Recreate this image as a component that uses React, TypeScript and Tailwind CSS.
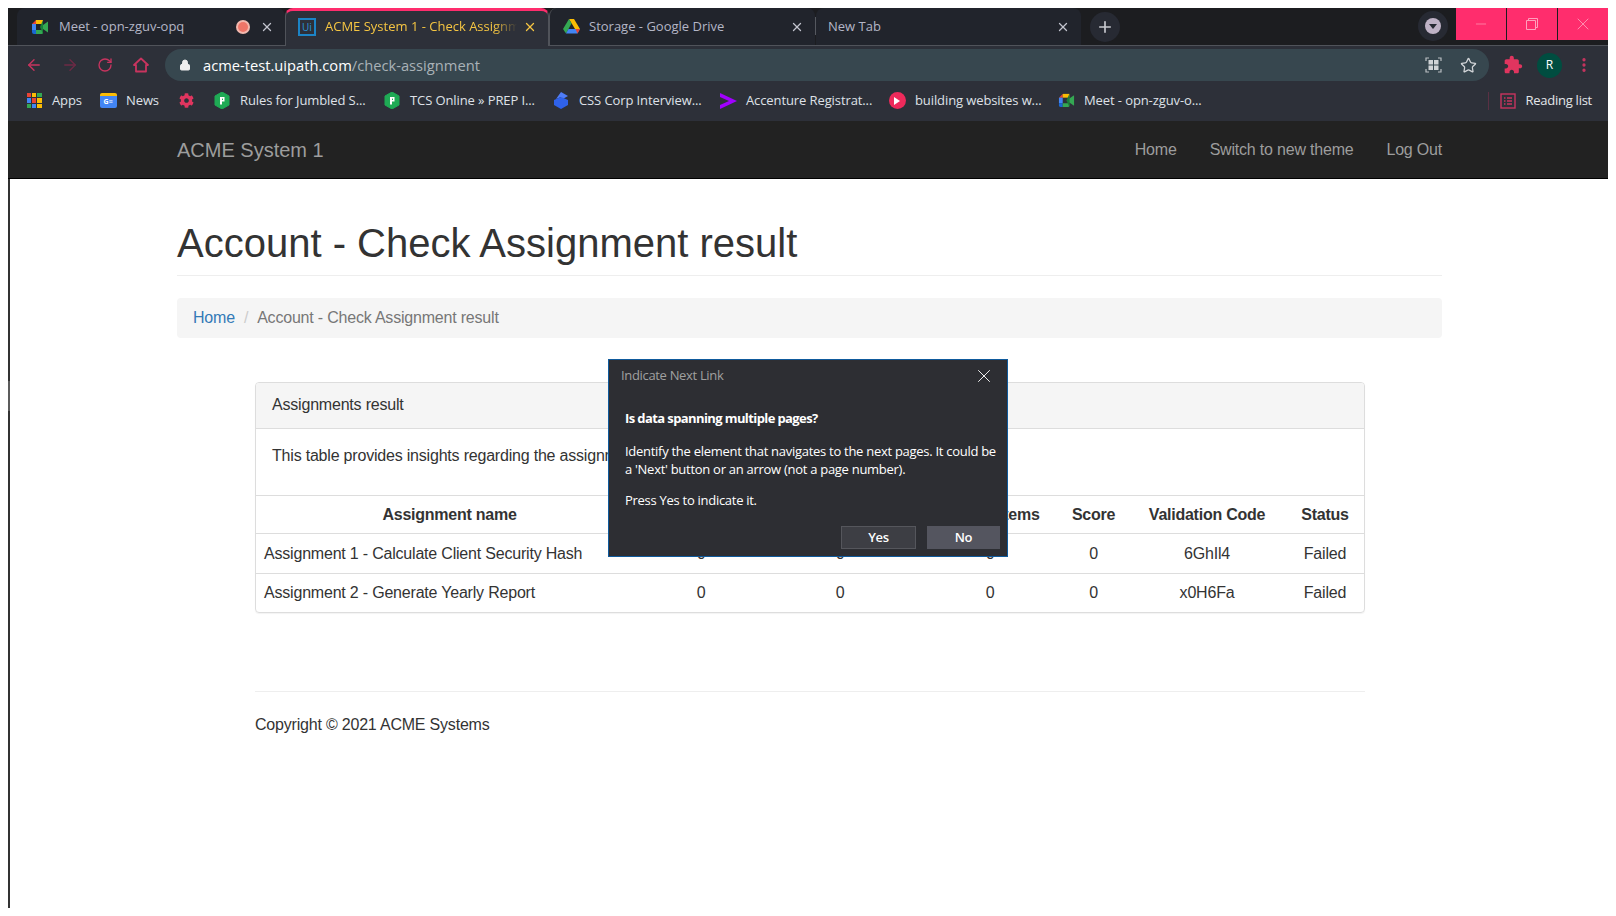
import React from "react";
import { ArrowLeft, ArrowRight, RotateCw, Lock, Star, X, Plus, MoreVertical, Minus } from "lucide-react";
import { FaCog } from "react-icons/fa";

const MeetIcon = ({ size = 18 }: { size?: number }) => (
  <svg width={size} height={size} viewBox="0 0 18 18">
    <path d="M1 6 L5 2 H5 V6 Z" fill="#ea4335" />
    <path d="M5 2 H12 V6 H5 Z" fill="#fbbc04" />
    <path d="M1 6 H5 V12 H1 Z" fill="#4285f4" />
    <path d="M1 12 H5 V16 H3 Q1 16 1 14 Z" fill="#1967d2" />
    <path d="M5 12 H12 V14.5 Q12 16 10.5 16 H5 Z" fill="#34a853" />
    <path d="M12 2 V6 L12 12 V16 L9 9 Z" fill="#188038" />
    <path d="M12 7 L17 3.5 V14.5 L12 11 Z" fill="#34a853" />
  </svg>
);

const DriveIcon = () => (
  <svg width="17" height="15" viewBox="0 0 17 15">
    <path d="M6 0 H11 L17 10 H12 Z" fill="#fbbc04" />
    <path d="M6 0 L8.5 4.5 L3 14.5 L0 10 Z" fill="#34a853" />
    <path d="M5.5 10 H17 L14.5 14.5 H3 Z" fill="#4285f4" />
    <path d="M14.5 14.5 L12.5 10 H17 Z" fill="#ea4335" />
  </svg>
);

const GreenBadge = () => (
  <svg width="16" height="17" viewBox="0 0 16 17">
    <path d="M8 0 L15 4 V13 L8 17 L1 13 V4 Z" fill="#1faa55" strokeLinejoin="round" stroke="#1faa55" />
    <path d="M6 5 H10.5 V9.5 H8 V12.5 H6 Z" fill="#fff" />
    <rect x="8" y="6.6" width="1" height="1.4" fill="#1faa55" />
  </svg>
);

const Bookmark = ({ icon, label, w }: { icon: React.ReactNode; label?: string; w: number }) => (
  <div className="flex items-center gap-[9px]" style={{ width: w }}>
    <span className="flex w-[18px] shrink-0 justify-center">{icon}</span>
    {label && <span className="whitespace-nowrap text-[13px] tracking-[-0.1px] text-[#dfe1e8]">{label}</span>}
  </div>
);

const Tab = ({
  icon,
  label,
  width,
  active,
  outlined,
  roomy,
  extra,
}: {
  icon?: React.ReactNode;
  label: string;
  width: number;
  active?: boolean;
  outlined?: boolean;
  roomy?: boolean;
  extra?: React.ReactNode;
}) => (
  <div
    className={`flex shrink-0 items-center rounded-t-lg pr-[11px] ${roomy ? "pl-[14px]" : "pl-[12px]"} ${
      active
        ? "h-[38px] border-x border-t-[3px] border-x-[#50535a] border-t-[#ff2d6d] bg-[#2d3039] pb-[3px]"
        : "h-[37px] bg-[#21242c]"
    } ${outlined ? "border-l border-l-[#50535a]" : ""}`}
    style={{ width }}
  >
    {icon && <span className={`flex w-[18px] shrink-0 justify-center ${roomy ? "mr-[10px]" : "mr-[9px]"}`}>{icon}</span>}
    <span
      className={`min-w-0 flex-1 overflow-hidden whitespace-nowrap text-[13px] ${
        active ? "text-[#f5c542] [mask-image:linear-gradient(to_right,black_88%,transparent)]" : "text-[#b4b6c6]"
      }`}
    >
      {label}
    </span>
    {extra}
    <X size={14} strokeWidth={2.2} className={`ml-[6px] shrink-0 ${active ? "text-[#f5c542]" : "text-[#c2c4ce]"}`} />
  </div>
);

const rows = [
  { name: "Assignment 1 - Calculate Client Security Hash", a: "0", b: "0", c: "0", score: "0", code: "6GhIl4", status: "Failed" },
  { name: "Assignment 2 - Generate Yearly Report", a: "0", b: "0", c: "0", score: "0", code: "x0H6Fa", status: "Failed" },
];

const colClass = "grid grid-cols-[387px_116px_162px_138px_69px_158px_1fr] items-center text-center";

export default function App() {
  return (
    <div
      className="relative h-[916px] w-[1616px] overflow-hidden bg-white pl-[8px] pr-[8px] pt-[8px] text-[#333]"
      style={{ fontFamily: '"Liberation Sans", Arial, sans-serif' }}
    >
      {/* browser chrome */}
      <div className="text-[13px]" style={{ fontFamily: '"Open Sans", "Noto Sans", sans-serif' }}>
        <div className="flex h-[38px] items-start border-b border-[#50535a] bg-[#1c1d20] pl-[9px]">
          <Tab
            width={268}
            label="Meet - opn-zguv-opq"
            roomy
            icon={<MeetIcon />}
            extra={
              <span className="mr-[4px] flex h-[14px] w-[14px] items-center justify-center rounded-full bg-[#f2b8ae]">
                <span className="h-[10px] w-[10px] rounded-full bg-[#ef7568]" />
              </span>
            }
          />
          <Tab width={264} label="ACME System 1 - Check Assignm" active icon={
            <span className="flex h-[18px] w-[18px] items-center justify-center border-2 border-[#1c84c6] text-[10px] leading-none text-[#2a97dc]">Ui</span>
          } />
          <Tab width={266} label="Storage - Google Drive" outlined icon={<DriveIcon />} />
          <div className="mt-[9px] h-[18px] w-px bg-[#55585f]" />
          <Tab width={265} label="New Tab" />
          <div className="ml-[9px] mt-[4px] flex h-[30px] w-[30px] items-center justify-center rounded-full bg-[#272a33]">
            <Plus size={18} strokeWidth={2.2} className="text-[#c9cad0]" />
          </div>
          <div className="ml-auto mr-[8px] mt-[3px] flex h-[30px] w-[30px] items-center justify-center rounded-full bg-[#272a33]">
            <span className="flex h-[16px] w-[16px] items-center justify-center rounded-full bg-[#bfb2c6]">
              <span className="h-0 w-0 border-x-[4px] border-t-[5px] border-x-transparent border-t-[#272a33]" />
            </span>
          </div>
          <div className="flex h-[32px] w-[152px] gap-px">
            <div className="flex flex-1 items-center justify-center bg-[#ff2d6d]">
              <Minus size={16} strokeWidth={1} className="text-[#ffa0bd]" />
            </div>
            <div className="flex flex-1 items-center justify-center bg-[#ff2d6d]">
              <svg width="12" height="12" viewBox="0 0 12 12" fill="none" stroke="#ffa0bd">
                <path d="M0.5 2.5 H9.5 V11.5 H0.5 Z M2.5 2.5 V0.5 H11.5 V9.5 H9.5" />
              </svg>
            </div>
            <div className="flex flex-1 items-center justify-center bg-[#ff2d6d]">
              <X size={20} strokeWidth={1} className="text-[#ffa0bd]" />
            </div>
          </div>
        </div>

        <div className="flex h-[38px] items-center bg-[#2d3039] pl-[17px] pr-[15px]">
          <ArrowLeft size={18} strokeWidth={1.8} className="text-[#c8345f]" />
          <ArrowRight size={18} strokeWidth={1.8} className="ml-[18px] text-[#6d2a45]" />
          <RotateCw size={16} strokeWidth={2} className="ml-[18px] text-[#c8345f]" />
          <svg width="18" height="18" viewBox="0 0 18 18" fill="none" stroke="#c8345f" strokeWidth="1.8" className="ml-[19px]">
            <path d="M9 2.5 L16 9 H14 V15.5 H4 V9 H2 Z" strokeLinejoin="round" />
          </svg>
          <div className="ml-[15px] flex h-[32px] flex-1 items-center rounded-full bg-[#37474f] pl-[14px] pr-[12px]">
            <Lock size={12} fill="#eeeeee" strokeWidth={2} className="text-[#eeeeee]" />
            <span className="ml-[12px] text-[14.7px] text-white">
              acme-test.uipath.com<span className="text-[#a9b2b7]">/check-assignment</span>
            </span>
            <svg width="17" height="16" viewBox="0 0 17 16" fill="none" className="ml-auto">
              <path d="M1 4 V1 H4 M13 1 H16 V4 M16 12 V15 H13 M4 15 H1 V12" stroke="#b9bec2" strokeWidth="1.2" />
              <rect x="3.5" y="3" width="4.5" height="4.5" fill="#cfd3d6" />
              <rect x="9" y="3" width="4.5" height="4.5" fill="#cfd3d6" />
              <rect x="3.5" y="8.5" width="4.5" height="4.5" fill="#cfd3d6" />
              <rect x="9" y="8.5" width="4.5" height="4.5" fill="#cfd3d6" />
            </svg>
            <Star size={17} strokeWidth={1.8} className="ml-[18px] text-[#d2d5d8]" />
          </div>
          <svg width="20" height="20" viewBox="0 0 24 24" fill="#e0355f" className="ml-[14px]">
            <path d="M20.5 11H19V7c0-1.1-.9-2-2-2h-4V3.5C13 2.12 11.88 1 10.5 1S8 2.12 8 3.5V5H4c-1.1 0-1.99.9-1.99 2v3.8H3.5c1.49 0 2.7 1.21 2.7 2.7s-1.21 2.7-2.7 2.7H2V20c0 1.1.9 2 2 2h3.8v-1.5c0-1.49 1.21-2.7 2.7-2.7 1.49 0 2.7 1.21 2.7 2.7V22H17c1.1 0 2-.9 2-2v-4h1.5c1.38 0 2.5-1.12 2.5-2.5S21.88 11 20.5 11z" />
          </svg>
          <span className="ml-[14px] flex h-[25px] w-[25px] items-center justify-center rounded-full bg-[#004d40] text-[12px] text-white">R</span>
          <MoreVertical size={18} strokeWidth={2.4} className="ml-[13px] text-[#c8345f]" />
        </div>

        <div className="flex h-[37px] items-center bg-[#2d3039] pb-[4px] pl-[17px] pr-[16px]">
          <Bookmark w={74} label="Apps" icon={
            <span className="grid h-[15px] w-[15px] grid-cols-3 gap-[1px]">
              {["#ea4335", "#fbbc04", "#34a853", "#4285f4", "#ea4335", "#fbbc04", "#34a853", "#4285f4", "#fbbc04"].map((c, i) => (
                <span key={i} style={{ backgroundColor: c }} />
              ))}
            </span>
          } />
          <Bookmark w={78} label="News" icon={
            <span className="flex h-[15px] w-[17px] items-center justify-center rounded-[2px] border-t-[3px] border-t-[#fbbc04] bg-[#4285f4] text-[7px] font-bold text-white">G≡</span>
          } />
          <Bookmark w={36} icon={<FaCog size={15} className="text-[#e0355f]" />} />
          <Bookmark w={170} label="Rules for Jumbled S..." icon={<GreenBadge />} />
          <Bookmark w={169} label="TCS Online » PREP I..." icon={<GreenBadge />} />
          <Bookmark w={167} label="CSS Corp Interview..." icon={
            <svg width="16" height="17" viewBox="0 0 16 17">
              <path d="M8 0 L15 4 L8 8 L8 5 L3 7 Z" fill="#4f7cf7" />
              <path d="M1 8 L8 5 L15 8 V13 L8 17 L1 13 Z" fill="#2f62ea" />
            </svg>
          } />
          <Bookmark w={169} label="Accenture Registrat..." icon={
            <svg width="17" height="16" viewBox="0 0 17 16">
              <path d="M0 0 L17 8 L0 16 V12 L9 8 L0 4 Z" fill="#a100ff" />
            </svg>
          } />
          <Bookmark w={169} label="building websites w..." icon={
            <span className="flex h-[17px] w-[17px] items-center justify-center rounded-full bg-[#ee2a5b]">
              <span className="h-0 w-0 border-y-[4px] border-l-[6px] border-y-transparent border-l-white" />
            </span>
          } />
          <Bookmark w={200} label="Meet - opn-zguv-o..." icon={<MeetIcon size={17} />} />
          <div className="ml-auto flex items-center">
            <div className="mr-[11px] h-[18px] w-px bg-[#5a3044]" />
            <svg width="16" height="16" viewBox="0 0 16 16" fill="none" stroke="#c8345f" strokeWidth="1.4">
              <rect x="1" y="1" width="14" height="14" />
              <path d="M4 5h1.5M7 5h5M4 8h1.5M7 8h5M4 11h1.5M7 11h5" />
            </svg>
            <span className="ml-[9px] text-[13px] tracking-[-0.25px] text-[#e4e6ea]">Reading list</span>
          </div>
        </div>
      </div>

      {/* page */}
      <div className="relative tracking-[-0.2px]">
        <div className="flex h-[58px] items-center justify-between border-b border-black bg-[#222222] pl-[169px] pr-[166px] text-[#9d9d9d]">
          <span className="text-[20px] tracking-normal">ACME System 1</span>
          <nav className="flex gap-[33px] text-[16px]">
            <span>Home</span>
            <span>Switch to new theme</span>
            <span>Log Out</span>
          </nav>
        </div>

        <div className="relative h-[729px] border-l-2 border-l-[#333333] bg-white pl-[167px] pr-[166px]">
          <div className="border-b border-[#eeeeee] pb-[10px] pt-[42px]">
            <h1 className="text-[40px] leading-[1.1] tracking-normal text-[#333]">Account - Check Assignment result</h1>
          </div>
          <div className="mt-[22px] flex h-[40px] items-center rounded bg-[#f5f5f5] pl-[16px] pr-[17px] text-[16px]">
            <span className="text-[#337ab7]">Home</span>
            <span className="mx-[9px] text-[#cccccc]">/</span>
            <span className="text-[#777777]">Account - Check Assignment result</span>
          </div>

          <div className="ml-[78px] mr-[77px]">
            <div className="mt-[44px] overflow-hidden rounded border border-[#dddddd] shadow-[0_1px_1px_rgba(0,0,0,0.05)]">
              <div className="flex h-[46px] items-center border-b border-[#dddddd] bg-[#f5f5f5] px-[16px] pb-[2px] text-[16px] text-[#333]">
                Assignments result
              </div>
              <div className="h-[66px] px-[16px] pt-[17px] text-[16px] leading-[20px] text-[#333]">
                This table provides insights regarding the assignments
              </div>
              <div className={`${colClass} h-[39px] border-y border-[#dddddd] text-[16px] font-bold tracking-[-0.25px]`}>
                <span>Assignment name</span>
                <span>Assigned</span>
                <span>Done</span>
                <span>Graded Items</span>
                <span>Score</span>
                <span>Validation Code</span>
                <span>Status</span>
              </div>
              {rows.map((r, i) => (
                <div key={r.code} className={`${colClass} h-[39px] text-[16px] ${i > 0 ? "border-t border-[#dddddd]" : ""}`}>
                  <span className="whitespace-nowrap pl-[8px] text-left">{r.name}</span>
                  <span>{r.a}</span>
                  <span>{r.b}</span>
                  <span>{r.c}</span>
                  <span>{r.score}</span>
                  <span>{r.code}</span>
                  <span>{r.status}</span>
                </div>
              ))}
            </div>
            <div className="mt-[78px] border-t border-[#eeeeee] pt-[21px] text-[16px] text-[#333]">
              Copyright © 2021 ACME Systems
            </div>
          </div>
        </div>
      </div>

      {/* lighter stretch on the left window edge */}
      <div className="absolute left-[8px] top-[381px] h-[30px] w-[2px] bg-[#5c5c5c]" />

      {/* dialog */}
      <div
        className="absolute left-[608px] top-[359px] flex h-[198px] w-[400px] flex-col border border-[#0f5a9c] bg-[#2d2e33] text-[13px] text-white"
        style={{ fontFamily: '"Open Sans", "Noto Sans", sans-serif' }}
      >
        <div className="flex h-[31px] items-center justify-between pl-[12px] pr-[12px] tracking-[-0.33px] text-[#a0a0a0]">
          <span>Indicate Next Link</span>
          <X size={22} strokeWidth={1} className="text-white" />
        </div>
        <div className="px-[16px] pt-[18px]">
          <p className="font-bold leading-[18px] tracking-[-0.6px]">Is data spanning multiple pages?</p>
          <p className="mt-[15px] w-[380px] whitespace-nowrap leading-[18px] tracking-[-0.28px]">
            Identify the element that navigates to the next pages. It could be
            <br />a 'Next' button or an arrow (not a page number).
          </p>
          <p className="mt-[13px] leading-[18px] tracking-[-0.28px]">Press Yes to indicate it.</p>
        </div>
        <div className="mt-auto flex justify-end gap-[11px] pb-[7px] pr-[7px]">
          <button className="h-[23px] w-[75px] border border-[#55565c] bg-[#3d3e44] font-semibold tracking-[-0.3px] text-white">Yes</button>
          <button className="h-[23px] w-[73px] bg-[#54555f] font-semibold tracking-[-0.3px] text-white">No</button>
        </div>
      </div>
    </div>
  );
}
